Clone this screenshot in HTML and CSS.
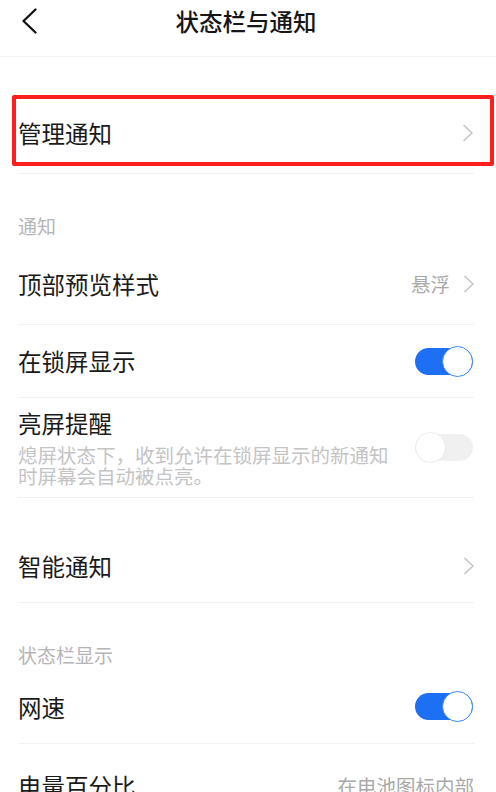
FILE: index.html
```html
<!DOCTYPE html>
<html lang="zh-CN">
<head>
<meta charset="utf-8">
<title>状态栏与通知</title>
<link rel="stylesheet" href="styles.css">
</head>
<body>
<header class="topbar">
  <div class="topbar-side">
    <svg class="back" viewBox="0 0 16 26" width="16" height="26"><path d="M14.5 1.5 L2.5 13 L14.5 24.5" fill="none" stroke="#111" stroke-width="2.3" stroke-linecap="round" stroke-linejoin="round"/></svg>
  </div>
  <h1 class="title">状态栏与通知</h1>
  <div class="topbar-side"></div>
</header>

<div class="highlight">
  <div class="row row-hl">
    <span class="row-title">管理通知</span>
    <span class="row-end"><svg class="chev" viewBox="0 0 12 18" width="12" height="18"><path d="M2 1.5 L10 9 L2 16.5" fill="none" stroke="#c6c6c6" stroke-width="1.7" stroke-linecap="round" stroke-linejoin="round"/></svg></span>
  </div>
</div>

<main class="list">
  <div class="sep"></div>

  <div class="section-label label-first">通知</div>

  <div class="row row-first">
    <span class="row-title">顶部预览样式</span>
    <span class="row-end"><span class="value">悬浮</span><svg class="chev" viewBox="0 0 12 18" width="12" height="18"><path d="M2 1.5 L10 9 L2 16.5" fill="none" stroke="#c6c6c6" stroke-width="1.7" stroke-linecap="round" stroke-linejoin="round"/></svg></span>
  </div>

  <div class="row">
    <span class="row-title">在锁屏显示</span>
    <span class="toggle on"><span class="knob"></span></span>
  </div>

  <div class="row row-desc">
    <div class="row-text">
      <div class="row-title">亮屏提醒</div>
      <div class="desc">熄屏状态下，收到允许在锁屏显示的新通知时屏幕会自动被点亮。</div>
    </div>
    <span class="toggle off"><span class="knob"></span></span>
  </div>

  <div class="row row-gap">
    <span class="row-title">智能通知</span>
    <span class="row-end"><svg class="chev" viewBox="0 0 12 18" width="12" height="18"><path d="M2 1.5 L10 9 L2 16.5" fill="none" stroke="#c6c6c6" stroke-width="1.7" stroke-linecap="round" stroke-linejoin="round"/></svg></span>
  </div>

  <div class="section-label label-second">状态栏显示</div>

  <div class="row row-speed">
    <span class="row-title">网速</span>
    <span class="toggle on"><span class="knob"></span></span>
  </div>

  <div class="row row-last">
    <span class="row-title">电量百分比</span>
    <span class="row-end"><span class="value value-last">在电池图标内部</span></span>
  </div>
</main>
</body>
</html>
```

FILE: styles.css
```css
* { box-sizing: border-box; }

html, body {
  margin: 0;
  padding: 0;
  background: #ffffff;
}

body {
  width: 496px;
  overflow: hidden;
  font-family: "Noto Sans CJK SC", "Noto Sans", sans-serif;
  color: #1a1a1a;
}

.topbar {
  display: grid;
  grid-template-columns: 1fr auto 1fr;
  align-items: center;
  height: 57px;
  padding-bottom: 15px;
  border-bottom: 1px solid #f4f4f4;
}

.topbar-side {
  display: flex;
  align-items: center;
  padding-left: 21px;
}

.back { display: block; }

.title {
  margin: 0;
  font-size: 23.5px;
  font-weight: 500;
  line-height: 30px;
  color: #161616;
  position: relative;
  left: -2px;
}

.highlight {
  margin: 38px 2px 0 12px;
  border: 4px solid #ff1e1e;
  border-radius: 2px;
  padding: 4px 17px 0 2px;
}

.list {
  margin: 7px 22px 0 18px;
}

.sep {
  height: 1px;
  background: #f2f2f2;
}

.row {
  display: flex;
  align-items: center;
  justify-content: space-between;
  height: 73px;
  border-bottom: 1px solid #f2f2f2;
}

.row-hl {
  height: 59px;
  border-bottom: none;
}

.row-first {
  height: 77px;
  padding-bottom: 4px;
}

.row-speed {
  height: 74px;
}

.row-last {
  height: 84px;
  border-bottom: none;
}

.row-title {
  font-size: 23.5px;
  line-height: 30px;
  color: #1a1a1a;
}

.row-end {
  display: flex;
  align-items: center;
}

.chev {
  display: block;
  margin-right: -1px;
}

.value {
  font-size: 19.5px;
  line-height: 26px;
  color: #a9a9a9;
  margin-right: 13px;
}

.value-last {
  margin-right: 0;
}

.section-label {
  font-size: 19px;
  line-height: 24px;
  color: #b5b5b5;
}

.label-first {
  padding: 40px 0 10px;
}

.label-second {
  padding: 40px 0 3px;
}

.row-desc {
  height: auto;
  padding: 10px 0 11px;
}

.row-text {
  width: 385px;
}

.desc {
  margin-top: 6px;
  font-size: 19.5px;
  line-height: 21px;
  color: #c4c4c4;
}

.row-gap {
  margin-top: 32px;
}

.toggle {
  position: relative;
  display: block;
  width: 58px;
  height: 31px;
  margin-right: 1px;
  flex-shrink: 0;
}

.toggle::before {
  content: "";
  position: absolute;
  left: 0;
  right: 0;
  top: 2px;
  bottom: 2px;
  border-radius: 14px;
}

.toggle.on::before { background: #1d6ff3; }
.toggle.off::before { background: #f0f0f0; }

.knob {
  position: absolute;
  top: 0;
  width: 31px;
  height: 31px;
  border-radius: 50%;
  background: #ffffff;
}

.toggle.on .knob {
  right: 0;
  border: 1.5px solid #3f86f7;
}

.toggle.off .knob {
  left: 0;
  border: 1.5px solid #ececec;
}
```
